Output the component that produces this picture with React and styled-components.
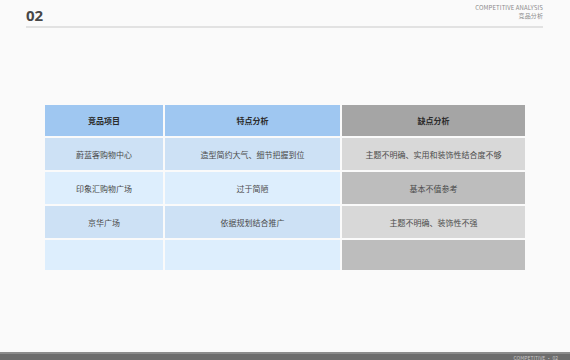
import React from 'react';
import styled, { createGlobalStyle } from 'styled-components';

const Global = createGlobalStyle`
  html, body { margin: 0; padding: 0; background: #fafafa; }
  body { font-family: "Noto Sans CJK SC", "Liberation Sans", sans-serif; }
`;

const Page = styled.div`
  width: 570px;
  height: 360px;
  display: flex;
  flex-direction: column;
  background: #fafafa;
  overflow: hidden;
`;

const Header = styled.div`
  margin: 0 27px 0 26px;
  height: 26px;
  display: flex;
  justify-content: space-between;
  align-items: flex-start;
  border-bottom: 2px solid #e2e2e2;
`;

const Num = styled.div`
  font-family: "Open Sans", "Liberation Sans", sans-serif;
  font-weight: 700;
  font-size: 15px;
  line-height: 15px;
  color: #474747;
  margin-top: 8px;
`;

const Caption = styled.div`
  display: flex;
  flex-direction: column;
  align-items: flex-end;
  margin-top: 4px;
  color: #8a8a8a;
  font-size: 6px;
  line-height: 8px;
  letter-spacing: 0.1px;
`;

const Main = styled.div`
  flex: 1;
  padding: 77px 0 0 45px;
`;

const Table = styled.div`
  width: 480px;
  display: grid;
  grid-template-columns: 118px 175px 183px;
  grid-template-rows: 31px 32px 32px 32px 30px;
  gap: 2px;
`;

const Cell = styled.div`
  display: flex;
  align-items: center;
  justify-content: center;
  font-size: 8px;
  color: ${(p) => (p.head ? '#2b2b2b' : '#4a4a4a')};
  font-weight: ${(p) => (p.head ? 700 : 400)};
  background: ${(p) => p.bg};
`;

const Footer = styled.div`
  height: 6px;
  background: #6d6d6d;
  border-top: 2px solid #8c8c8c;
  display: flex;
  justify-content: flex-end;
  align-items: center;
  padding-right: 12px;
  color: #c8c8c8;
  font-size: 5px;
`;

const rows = [
  ['竞品项目', '特点分析', '缺点分析'],
  ['蔚蓝客购物中心', '造型简约大气、细节把握到位', '主题不明确、实用和装饰性结合度不够'],
  ['印象汇购物广场', '过于简陋', '基本不值参考'],
  ['京华广场', '依据规划结合推广', '主题不明确、装饰性不强'],
  ['', '', ''],
];

const blue = ['#cde1f5', '#ddeefd'];
const gray = ['#d8d8d8', '#bdbdbd'];

export default function App() {
  return (
    <Page>
      <Global />
      <Header>
        <Num>02</Num>
        <Caption>
          <span>COMPETITIVE ANALYSIS</span>
          <span>竞品分析</span>
        </Caption>
      </Header>
      <Main>
        <Table>
          {rows.map((r, i) => r.map((t, j) => {
            let bg;
            if (i === 0) bg = j === 2 ? '#a5a5a5' : '#9fc7f1';
            else if (j === 2) bg = gray[(i - 1) % 2];
            else bg = blue[(i - 1) % 2];
            return (
              <Cell key={`${i}-${j}`} head={i === 0} bg={bg}>{t}</Cell>
            );
          }))}
        </Table>
      </Main>
      <Footer>COMPETITIVE · 02</Footer>
    </Page>
  );
}
